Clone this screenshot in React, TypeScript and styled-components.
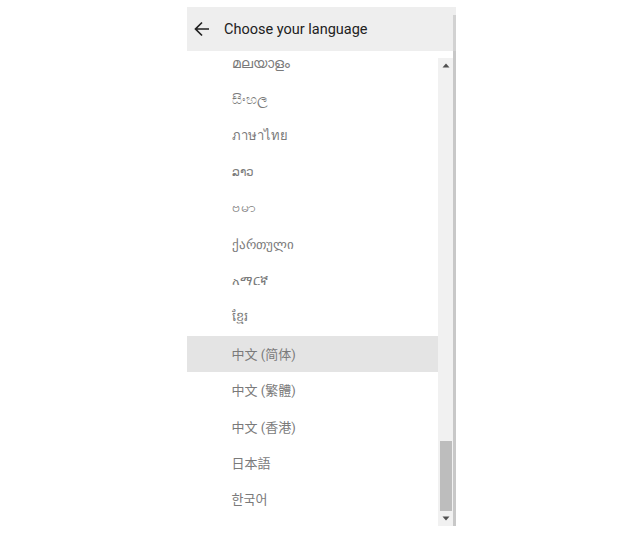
import React from "react";
import styled, { createGlobalStyle } from "styled-components";

const languages = [
  { name: "മലയാളം", size: 14.2 },
  { name: "සිංහල", size: 13.5 },
  { name: "ภาษาไทย", size: 13 },
  { name: "ລາວ", size: 12 },
  { name: "ဗမာ", size: 14 },
  { name: "ქართული", size: 12.6 },
  { name: "አማርኛ", size: 12.5 },
  { name: "ខ្មែរ", size: 13 },
  { name: "中文 (简体)", size: 13, lift: 1 },
  { name: "中文 (繁體)", size: 13, lift: 1 },
  { name: "中文 (香港)", size: 13, lift: 1 },
  { name: "日本語", size: 13, lift: 1 },
  { name: "한국어", size: 13, lift: 1 },
];

const GlobalStyle = createGlobalStyle`
  html, body {
    margin: 0;
    padding: 0;
    background: #fff;
  }
`;

const Page = styled.div`
  display: flex;
  padding: 7px 0 0 187px;
  width: 640px;
  height: 550px;
  box-sizing: border-box;
  font-family: Roboto, "Noto Sans", "Noto Sans CJK SC", sans-serif;
`;

const Panel = styled.section`
  display: flex;
  flex-direction: column;
  width: 269px;
  height: 519px;
`;

const Header = styled.header`
  position: relative;
  display: flex;
  align-items: center;
  gap: 14px;
  flex: 0 0 44px;
  padding-left: 7px;
  background: #eeeeee;
  color: #212121;
  font-size: 14.5px;

  &::after {
    content: "";
    position: absolute;
    top: 8px;
    right: 0;
    bottom: 0;
    width: 3px;
    background: #d2d2d2;
  }
`;

const Body = styled.div`
  display: flex;
  flex: 1;
  min-height: 0;
  border-right: 3px solid #c8c8c8;
`;

const List = styled.ul`
  flex: 1;
  margin: 0;
  padding: 0;
  list-style: none;
  overflow: hidden;
`;

const Rows = styled.div`
  margin-top: -6px;
`;

const Row = styled.li<{ $active?: boolean; $size: number; $lift?: number }>`
  display: flex;
  align-items: center;
  height: 36.35px;
  padding: 0 0 ${(p) => p.$lift ?? 0}px 44.5px;
  box-sizing: border-box;
  font-size: ${(p) => p.$size}px;
  color: #7a7a7a;
  background: ${(p) => (p.$active ? "#e4e4e4" : "transparent")};
`;

const Track = styled.div`
  display: flex;
  flex-direction: column;
  align-items: center;
  flex: 0 0 15px;
  margin-top: 7px;
  background: #f1f1f1;
`;

const ArrowButton = styled.div`
  display: flex;
  align-items: center;
  justify-content: center;
  flex: 0 0 15px;
`;

const TrackSpace = styled.div`
  flex: 1;
  display: flex;
  align-items: flex-end;
  justify-content: center;
  width: 100%;
`;

const Thumb = styled.div`
  width: 12px;
  height: 70px;
  background: #bdbdbd;
`;

const Arrow = ({ down }: { down?: boolean }) => (
  <svg width="8" height="5" viewBox="0 0 8 5">
    <path d={down ? "M0.5 0.5h7L4 4.5z" : "M0.5 4.5h7L4 0.5z"} fill="#505050" />
  </svg>
);

export default function App() {
  return (
    <>
      <GlobalStyle />
      <Page>
        <Panel>
          <Header>
            <svg width="16" height="16" viewBox="0 0 16 16" fill="none">
              <path d="M15 8H2M8 1.5L1.5 8 8 14.5" stroke="#212121" strokeWidth="1.7" />
            </svg>
            <span>Choose your language</span>
          </Header>
          <Body>
            <List>
              <Rows>
                {languages.map((lang) => (
                  <Row
                    key={lang.name}
                    $size={lang.size}
                    $lift={lang.lift}
                    $active={lang.name === "中文 (简体)"}
                  >
                    {lang.name}
                  </Row>
                ))}
              </Rows>
            </List>
            <Track>
              <ArrowButton>
                <Arrow />
              </ArrowButton>
              <TrackSpace>
                <Thumb />
              </TrackSpace>
              <ArrowButton>
                <Arrow down />
              </ArrowButton>
            </Track>
          </Body>
        </Panel>
      </Page>
    </>
  );
}
